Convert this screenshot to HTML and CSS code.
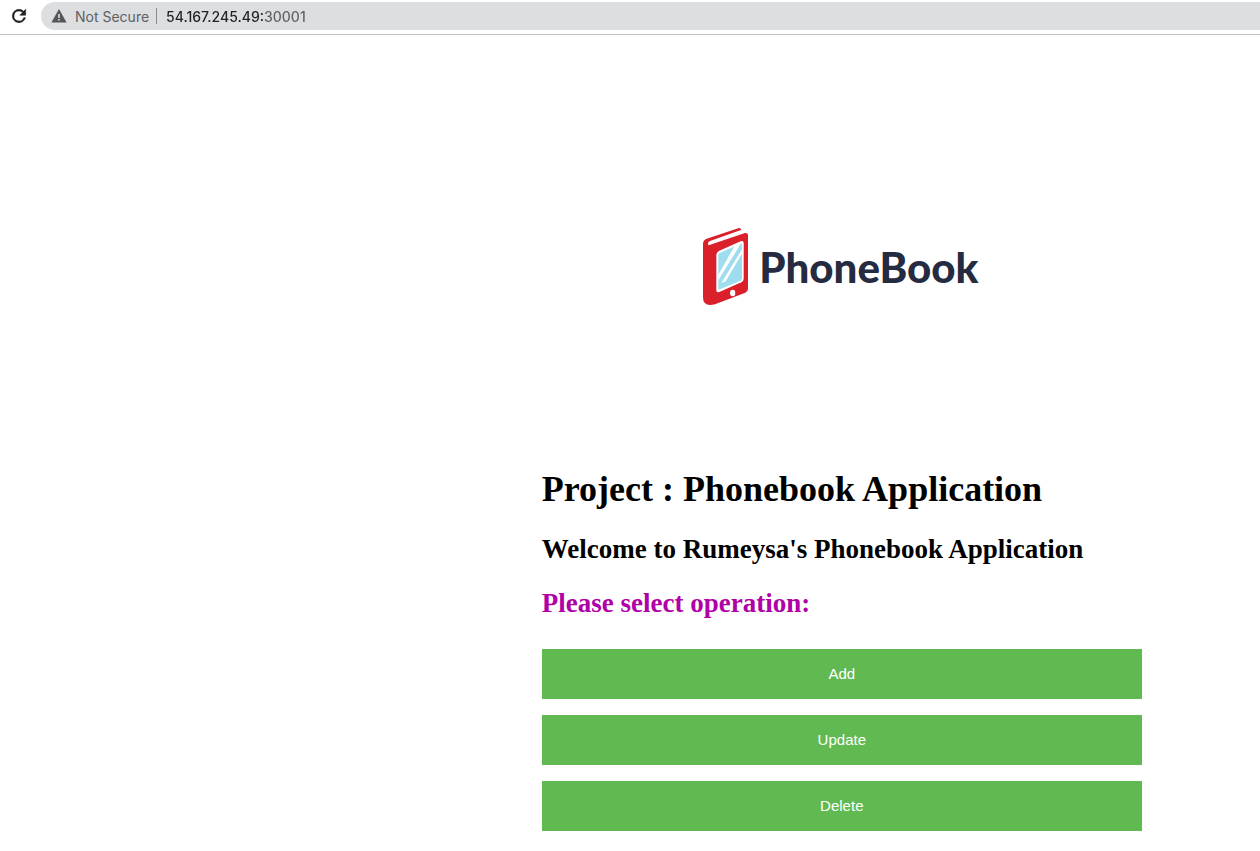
FILE: index.html
```html
<!DOCTYPE html>
<html lang="en">
<head>
<meta charset="utf-8">
<title>Phonebook Application</title>
<link rel="stylesheet" href="styles.css">
</head>
<body>
<header class="toolbar">
  <button class="reload" type="button" aria-label="Reload">
    <svg width="24" height="24" viewBox="0 0 24 24"><path d="M17.65 6.35A7.96 7.96 0 0 0 12 4a8 8 0 1 0 7.73 10h-2.08A6 6 0 1 1 12 6c1.66 0 3.14.69 4.22 1.78L13 11h7V4z" fill="#202124" stroke="#202124" stroke-width=".7"/></svg>
  </button>
  <div class="omnibox">
    <button class="security" type="button">
      <svg width="16" height="14" viewBox="0 0 16 14"><path d="M8 0 15.600 13.400H.4z" fill="#55565a"/><path d="M7.200 5h1.600v4H7.200zM7.200 10h1.600v1.600H7.200z" fill="#dddee0"/></svg>
      <span>Not Secure</span>
    </button>
    <input class="address" type="text" aria-label="Address" value="54.167.245.49:30001" spellcheck="false">
  </div>
</header>
<main class="content">
  <div class="logo">
    <svg class="book" width="60" height="92" viewBox="0 0 180 276">
      <path d="M24 72Q24 60 35 56L132 24Q139 23 138 30L43 64Q36 70 41 76L150 39Q159 37 159 47V206Q159 214 151 218L60 253Q24 262 24 232Z" fill="#da202b"/>
      <path d="M73 92 137 64Q146 61 146 70V176Q146 183 139 187L73 216Q64 219 64 210V104Q64 96 73 92Z" fill="#fff"/>
      <path d="M76 98 136 71Q141 69 141 75V174Q141 179 136 182L75 208Q70 210 70 204V106Q70 101 76 98Z" fill="#9edcf0"/>
      <path d="M70 164 118 79 138 70 70 181ZM79 189 141 88V101L92 184Z" fill="#fff"/>
      <ellipse cx="113" cy="219" rx="8" ry="10" fill="#fff"/>
    </svg>
    <span class="wordmark">PhoneBook</span>
  </div>
  <h1 class="title">Project : Phonebook Application</h1>
  <h2 class="subtitle">Welcome to Rumeysa's Phonebook Application</h2>
  <h2 class="subtitle prompt">Please select operation:</h2>
  <div class="actions">
    <button class="action" type="button">Add</button>
    <button class="action" type="button">Update</button>
    <button class="action" type="button">Delete</button>
  </div>
</main>
</body>
</html>
```
FILE: styles.css
```css
* { box-sizing: border-box; }

body {
  margin: 0;
  background: #fff;
  color: #000;
  font-family: "Liberation Serif", "Times New Roman", serif;
}

button, input {
  margin: 0;
  padding: 0;
  border: 0;
  background: none;
}

.toolbar {
  display: flex;
  align-items: center;
  gap: 12px;
  height: 35px;
  padding: 0 0 3px 9px;
  border-bottom: 1px solid #c4c4c4;
}

.reload { display: flex; width: 20px; }
.reload svg { width: 20px; height: 20px; }

.omnibox {
  display: flex;
  flex: 1;
  align-items: center;
  height: 28px;
  margin-top: 1px;
  padding-left: 10px;
  border-radius: 14px 0 0 14px;
  background: #dddee0;
  font-family: Inter, sans-serif;
  font-size: 14px;
}

.security {
  display: flex;
  align-items: center;
  gap: 8px;
  height: 16px;
  padding-right: 7px;
  border-right: 1px solid #888a8e;
  color: #5f6064;
  font: inherit;
}

.address {
  flex: 1;
  min-width: 0;
  height: 24px;
  margin-left: 9px;
  background: linear-gradient(90deg, #202124 98px, #5f6064 98px);
  background-clip: text;
  -webkit-background-clip: text;
  -webkit-text-fill-color: transparent;
  font: inherit;
  font-weight: 500;
}

.content {
  width: 600px;
  max-width: 57%;
  margin-left: 43%;
}

.logo {
  display: flex;
  align-items: center;
  justify-content: center;
  gap: 4px;
  padding: 185px 10px 156px 0;
}

.wordmark {
  padding-top: 2px;
  color: #252c42;
  font-family: Lato, sans-serif;
  font-size: 42px;
  font-weight: 900;
  line-height: 56px;
}

.title {
  margin: 0 0 24px;
  font-size: 36px;
  line-height: 42px;
}

.subtitle {
  margin: 0 0 24px;
  font-size: 27px;
  line-height: 30px;
}

.prompt { color: #b000a8; }

.actions {
  display: flex;
  flex-direction: column;
  gap: 16px;
  padding: 7px 0 20px;
}

.action {
  height: 50px;
  padding-bottom: 2px;
  background: #61ba51;
  color: #fff;
  font-family: "Liberation Sans", Arial, sans-serif;
  font-size: 15px;
}
```
